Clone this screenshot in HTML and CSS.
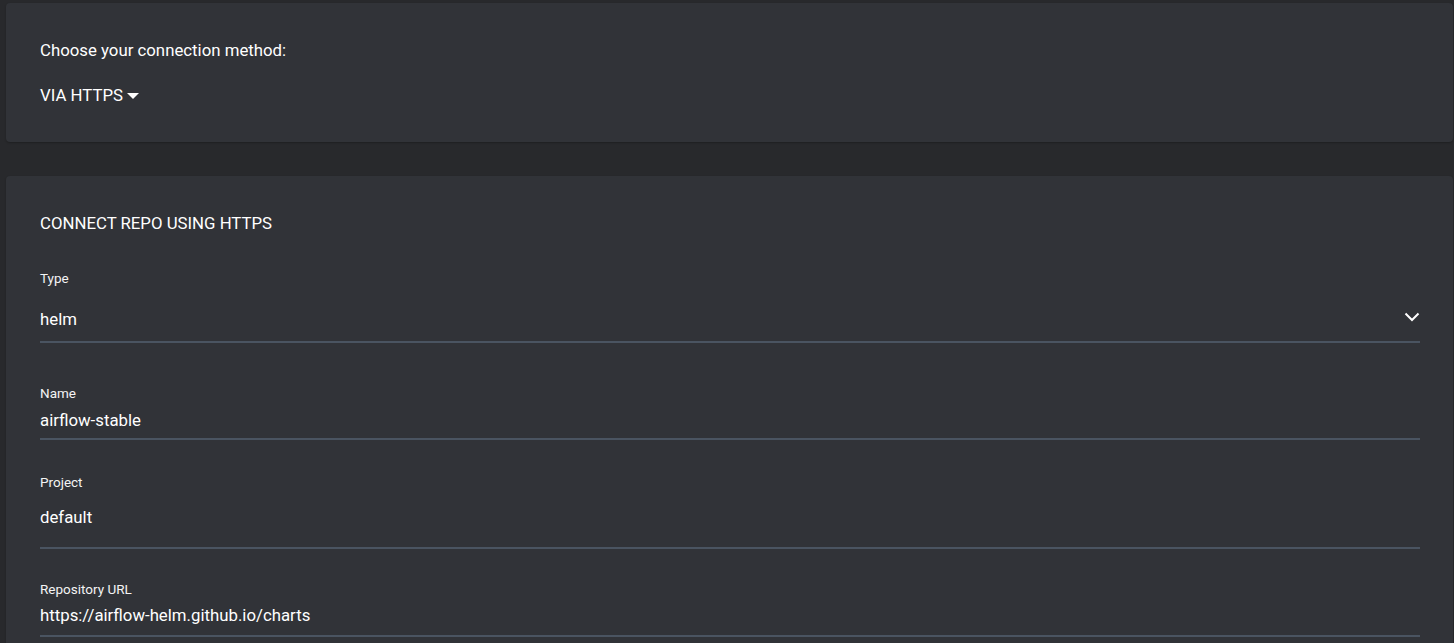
FILE: index.html
```html
<!DOCTYPE html>
<html>
<head>
  <title>Connect Repository</title>
  <link rel="stylesheet" href="styles.css">
</head>
<body>
  <div class="page">
    <div class="card card-method">
      <p class="method-title">Choose your connection method:</p>
      <div class="method-toggle">
        <span>VIA HTTPS</span>
        <span class="caret"></span>
      </div>
    </div>

    <div class="card card-form">
      <p class="form-title">CONNECT REPO USING HTTPS</p>

      <div class="field field-type">
        <label class="field-label">Type</label>
        <div class="field-value">
          <span>helm</span>
          <svg class="chevron" width="16" height="10" viewBox="0 0 16 10">
            <polyline points="1.5,1.5 8,8 14.5,1.5" fill="none" stroke="#fff" stroke-width="2"/>
          </svg>
        </div>
      </div>

      <div class="field field-name">
        <label class="field-label">Name</label>
        <div class="field-value"><span>airflow-stable</span></div>
      </div>

      <div class="field field-project">
        <label class="field-label">Project</label>
        <div class="field-value"><span>default</span></div>
      </div>

      <div class="field field-url">
        <label class="field-label">Repository URL</label>
        <div class="field-value"><span>https://airflow-helm.github.io/charts</span></div>
      </div>
    </div>
  </div>
</body>
</html>
```

FILE: styles.css
```css
body {
  margin: 0;
  background-color: #28292c;
  font-family: Roboto, "Liberation Sans", Arial, sans-serif;
  color: #fff;
  overflow: hidden;
}
.page {
  padding: 3px 1px 0 6px;
}
.card {
  background-color: #313338;
  border-radius: 4px;
  box-shadow: 0 1px 2px rgba(0, 0, 0, 0.25);
}
.card-method {
  padding: 35px 34px 35px;
  margin-bottom: 34px;
}
.method-title {
  margin: 0 0 21px;
  font-size: 16.8px;
  line-height: 24px;
}
.method-toggle {
  display: flex;
  align-items: center;
  font-size: 16.8px;
  line-height: 24px;
}
.caret {
  width: 0;
  height: 0;
  margin-left: 4px;
  margin-top: 1px;
  border-left: 6px solid transparent;
  border-right: 6px solid transparent;
  border-top: 6px solid #fff;
}
.card-form {
  padding: 35px 33px 40px 34px;
  min-height: 500px;
}
.form-title {
  margin: 0 0 35px;
  font-size: 16.8px;
  line-height: 24px;
}
.field-label {
  display: block;
  font-size: 13.5px;
  line-height: 16px;
  color: #f4f4f4;
}
.field-value {
  display: flex;
  justify-content: space-between;
  font-size: 16.8px;
  line-height: 24px;
  border-bottom: 2px solid #4a5461;
}
.chevron {
  margin-top: 5px;
}
.field-type .field-label {
  margin-bottom: 21px;
}
.field-type .field-value {
  padding-bottom: 10px;
}
.field-name {
  margin-top: 42px;
}
.field-name .field-label {
  margin-bottom: 7px;
}
.field-name .field-value {
  padding-bottom: 6px;
}
.field-project {
  margin-top: 34px;
}
.field-project .field-label {
  margin-bottom: 15px;
}
.field-project .field-value {
  padding-bottom: 18px;
}
.field-url {
  margin-top: 32px;
}
.field-url .field-label {
  margin-bottom: 6px;
}
.field-url .field-value {
  padding-bottom: 8px;
}
```
